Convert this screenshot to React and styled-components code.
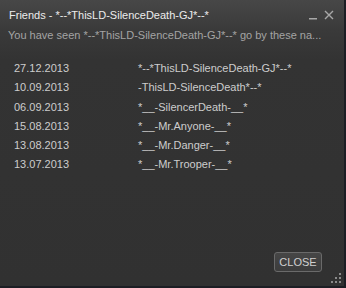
import React from "react";
import styled, { createGlobalStyle } from "styled-components";

const Global = createGlobalStyle`
  html, body { margin: 0; padding: 0; background: #1c1e24; }
  body { font-family: "Liberation Sans", Arial, sans-serif; }
`;

const Win = styled.div`
  position: relative;
  width: 344px;
  height: 286px;
  background: linear-gradient(to bottom, #474747 0px, #3a3a3a 30px, #333333 60px, #313131 100%);
  display: flex;
  flex-direction: column;
  box-sizing: border-box;
`;

const TitleBar = styled.div`
  display: flex;
  align-items: flex-start;
  justify-content: space-between;
  padding: 9px 10px 0 9px;
  height: 20px;
`;

const Title = styled.div`
  color: #ececec;
  font-size: 11px;
  line-height: 13px;
`;

const Controls = styled.div`
  display: flex;
  gap: 6px;
  margin-top: 1px;
`;

const Ctl = styled.svg`
  display: block;
  width: 10px;
  height: 10px;
`;

const Sub = styled.div`
  color: #a4a4a4;
  font-size: 11px;
  line-height: 13px;
  padding-left: 8px;
  white-space: nowrap;
`;

const List = styled.div`
  margin-top: 17px;
  padding-left: 14px;
  display: flex;
  flex-direction: column;
`;

const Row = styled.div`
  display: grid;
  grid-template-columns: 124px 1fr;
  height: 19.25px;
  line-height: 19px;
  font-size: 11px;
  color: #cdcdcd;
`;

const Footer = styled.div`
  margin-top: auto;
  display: flex;
  justify-content: flex-end;
  padding: 0 22px 14px 0;
`;

const Btn = styled.button`
  width: 48px;
  height: 20px;
  box-sizing: border-box;
  border: 1px solid #6a6a6a;
  border-radius: 3px;
  background: linear-gradient(#464646, #3c3c3c);
  color: #d0d0d0;
  font-family: "Liberation Sans", Arial, sans-serif;
  font-size: 11px;
  padding: 0;
  line-height: 18px;
`;

const Grip = styled.svg`
  position: absolute;
  right: 2px;
  bottom: 2px;
  width: 12px;
  height: 12px;
`;

const rows = [
  ["27.12.2013", "*--*ThisLD-SilenceDeath-GJ*--*"],
  ["10.09.2013", "-ThisLD-SilenceDeath*--*"],
  ["06.09.2013", "*__-SilencerDeath-__*"],
  ["15.08.2013", "*__-Mr.Anyone-__*"],
  ["13.08.2013", "*__-Mr.Danger-__*"],
  ["13.07.2013", "*__-Mr.Trooper-__*"],
];

export default function App() {
  return (
    <>
      <Global />
      <Win>
        <TitleBar>
          <Title>Friends - *--*ThisLD-SilenceDeath-GJ*--*</Title>
          <Controls>
            <Ctl viewBox="0 0 10 10">
              <rect x="1" y="8" width="8" height="1.5" fill="#a8a8a8" />
            </Ctl>
            <Ctl viewBox="0 0 10 10">
              <path d="M1 1 L9 9 M9 1 L1 9" stroke="#a8a8a8" strokeWidth="1.4" />
            </Ctl>
          </Controls>
        </TitleBar>
        <Sub>You have seen *--*ThisLD-SilenceDeath-GJ*--* go by these na...</Sub>
        <List>
          {rows.map(([d, n]) => (
            <Row key={d + n}>
              <span>{d}</span>
              <span>{n}</span>
            </Row>
          ))}
        </List>
        <Footer>
          <Btn>CLOSE</Btn>
        </Footer>
        <Grip viewBox="0 0 12 12">
          <g fill="#8a8a8a">
            <rect x="9" y="1" width="2" height="2" />
            <rect x="5" y="5" width="2" height="2" />
            <rect x="9" y="5" width="2" height="2" />
            <rect x="1" y="9" width="2" height="2" />
            <rect x="5" y="9" width="2" height="2" />
            <rect x="9" y="9" width="2" height="2" />
          </g>
        </Grip>
      </Win>
    </>
  );
}
